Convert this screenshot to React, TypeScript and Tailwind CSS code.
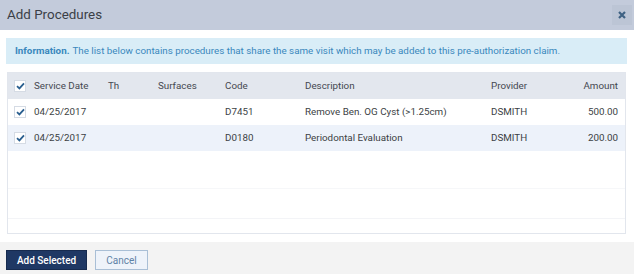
import { useState } from "react";

type Proc = {
  id: number;
  date: string;
  th: string;
  surfaces: string;
  code: string;
  description: string;
  provider: string;
  amount: string;
};

const procedures: Proc[] = [
  { id: 1, date: "04/25/2017", th: "", surfaces: "", code: "D7451", description: "Remove Ben. OG Cyst (>1.25cm)", provider: "DSMITH", amount: "500.00" },
  { id: 2, date: "04/25/2017", th: "", surfaces: "", code: "D0180", description: "Periodontal Evaluation", provider: "DSMITH", amount: "200.00" },
];

const cols = "grid grid-cols-[26px_74px_50px_67px_80px_186px_1fr_70px] items-center";

const Check = ({ checked, onClick }: { checked: boolean; onClick: () => void }) => (
  <button
    onClick={onClick}
    className="w-[12px] h-[12px] bg-white border border-[#d5dbe4] flex items-center justify-center ml-[6px]"
  >
    {checked && (
      <svg width="9" height="8" viewBox="0 0 9 8">
        <path d="M1 4.2 L3.4 6.4 L8 1.4" fill="none" stroke="#2a5f8f" strokeWidth="1.8" />
      </svg>
    )}
  </button>
);

const App = () => {
  const [selected, setSelected] = useState<number[]>([1, 2]);
  const allChecked = selected.length === procedures.length;

  const toggle = (id: number) =>
    setSelected(selected.includes(id) ? selected.filter((s) => s !== id) : [...selected, id]);

  return (
    <div className="w-[634px] h-[274px] bg-white flex flex-col font-['Roboto',sans-serif] text-[9.8px] text-[#3c3f44]">
      <div className="h-[30px] bg-[#c3cbdb] flex items-center justify-between pl-[7px] pr-[2px]">
        <span className="text-[13.4px] text-[#3b3f47]">Add Procedures</span>
        <button className="w-[20px] h-[20px] bg-[#bcc5d5] flex items-center justify-center">
          <svg width="8" height="8" viewBox="0 0 8 8">
            <path d="M1 1 L7 7 M7 1 L1 7" stroke="#3f6283" strokeWidth="2.2" />
          </svg>
        </button>
      </div>

      <div className="mt-[8px] mx-[6px] w-[621px] h-[26px] bg-[#d9edf7] flex items-center pl-[9px] text-[#3a88bd]">
        <span className="font-bold mr-[3px]">Information.</span>
        The list below contains procedures that share the same visit which may be added to this pre-authorization claim.
      </div>

      <div className="mt-[8px] ml-[7px] w-[619px] h-[162px] border border-[#e2e6ed] flex flex-col">
        <div className={`${cols} h-[26px] bg-[#e3e7ee] text-[#454850]`}>
          <Check checked={allChecked} onClick={() => setSelected(allChecked ? [] : procedures.map((p) => p.id))} />
          <span>Service Date</span>
          <span>Th</span>
          <span>Surfaces</span>
          <span>Code</span>
          <span>Description</span>
          <span>Provider</span>
          <span className="text-right pr-[7px]">Amount</span>
        </div>
        {procedures.map((p, i) => (
          <div key={p.id} className={`${cols} h-[26px] ${i % 2 === 1 ? "bg-[#edf2fa]" : "bg-white"}`}>
            <Check checked={selected.includes(p.id)} onClick={() => toggle(p.id)} />
            <span>{p.date}</span>
            <span>{p.th}</span>
            <span>{p.surfaces}</span>
            <span>{p.code}</span>
            <span>{p.description}</span>
            <span>{p.provider}</span>
            <span className="text-right pr-[7px]">{p.amount}</span>
          </div>
        ))}
        <div className="h-[38px] border-b border-[#f6f7f9]" />
        <div className="h-[30px] border-b border-[#f3f4f7]" />
      </div>

      <div className="mt-[8px] flex-1 bg-[#f3f3f3] flex items-start pt-[8px] pl-[6px] gap-[8px]">
        <button className="w-[81px] h-[20px] bg-[#1f3864] border border-[#172b4f] text-white text-[10px] font-medium">
          Add Selected
        </button>
        <button className="w-[53px] h-[20px] bg-[#eef3fa] border border-[#a9bfd6] text-[#5f82a6] text-[10px]">
          Cancel
        </button>
      </div>
    </div>
  );
};

export default App;
